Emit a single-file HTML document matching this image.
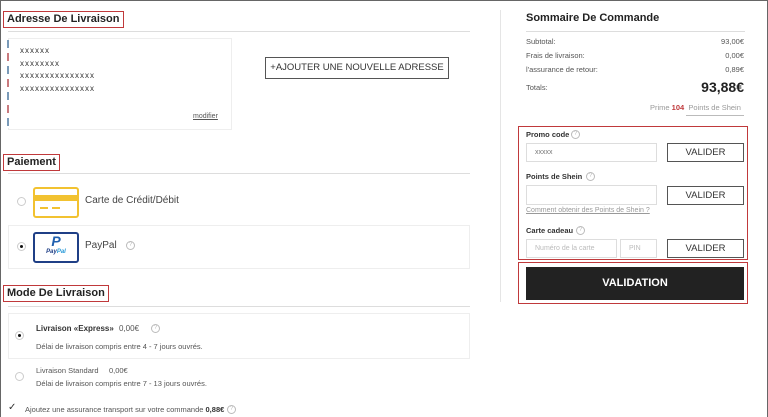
<!DOCTYPE html>
<html><head><meta charset="utf-8"><style>
*{margin:0;padding:0;box-sizing:border-box}
body{width:768px;height:417px;overflow:hidden;background:#fff;font-family:"Liberation Sans",Arial,sans-serif;color:#333;position:relative}
.a{position:absolute}
.frame{left:0;top:0;width:768px;height:417px;border:1px solid #666;border-bottom:none}
.h{font-weight:bold;font-size:11px;color:#222;border:1.5px solid #c0393b;padding:1px 3px;line-height:13px}
.ln{height:1px;background:#ddd}
.s{font-size:8px;color:#555}
.radio{width:9px;height:9px;border-radius:50%;border:1px solid #ccc;background:#fff}
.radio.on::after{content:"";position:absolute;left:2px;top:2px;width:3px;height:3px;border-radius:50%;background:#111}
.q{width:9px;height:9px;border-radius:50%;border:1px solid #bbb;font-size:6px;color:#bbb;text-align:center;line-height:7px}
.inp{border:1px solid #ddd;background:#fff;font-size:7px;color:#bbb;padding-left:8px;line-height:17px}
.btn{border:1px solid #555;font-size:9.5px;color:#333;text-align:center;line-height:17px}
.rb{border:1.5px solid #c0393b}
</style></head><body>
<div class="a frame"></div>

<div class="a h" style="left:3px;top:11px">Adresse De Livraison</div>
<div class="a ln" style="left:8px;top:31px;width:462px"></div>
<div class="a" style="left:8px;top:38px;width:224px;height:92px;border:1px solid #eee"></div>
<div class="a" style="left:7px;top:40px;width:2px;height:88px;background:repeating-linear-gradient(#7a9ab8 0 8px,#fff 8px 13px,#c97a7e 13px 21px,#fff 21px 26px)"></div>
<div class="a" style="left:20px;top:45px;font-size:8px;line-height:12.5px;letter-spacing:1px;color:#333">xxxxxx<br>xxxxxxxx<br>xxxxxxxxxxxxxxx<br>xxxxxxxxxxxxxxx</div>
<div class="a" style="left:193px;top:113px;font-size:7px;color:#555;text-decoration:underline">modifier</div>
<div class="a" style="left:265px;top:57px;width:184px;height:22px;border:1px solid #555;font-size:9.5px;color:#333;text-align:center;line-height:20px">+AJOUTER UNE NOUVELLE ADRESSE</div>

<div class="a h" style="left:3px;top:154px">Paiement</div>
<div class="a ln" style="left:8px;top:173px;width:462px"></div>
<div class="a radio" style="left:17px;top:197px"></div>
<div class="a" style="left:33px;top:187px;width:46px;height:31px;border:2px solid #f2c230;border-radius:3px"><div style="margin-top:6px;height:6px;background:#f2c230"></div><div style="margin:6px 0 0 5px;width:24px;height:2px;background:repeating-linear-gradient(90deg,#f2c230 0 8px,#fff 8px 12px)"></div></div>
<div class="a" style="left:85px;top:195px;font-size:10px;color:#444">Carte de Crédit/Débit</div>
<div class="a" style="left:8px;top:225px;width:462px;height:44px;border:1px solid #eee"></div>
<div class="a radio on" style="left:17px;top:242px"></div>
<div class="a" style="left:33px;top:232px;width:46px;height:31px;border:2px solid #1f3f86;border-radius:3px;text-align:center"><div style="font:italic bold 14px 'Liberation Sans';color:#1f5fae;line-height:15px">P</div><div style="font:italic bold 6px 'Liberation Sans';color:#1f3f86">Pay<span style="color:#2a9ad8">Pal</span></div></div>
<div class="a" style="left:85px;top:240px;font-size:10px;color:#444">PayPal</div>
<div class="a q" style="left:126px;top:241px">?</div>

<div class="a h" style="left:3px;top:285px">Mode De Livraison</div>
<div class="a ln" style="left:8px;top:306px;width:462px"></div>
<div class="a" style="left:8px;top:313px;width:462px;height:46px;border:1px solid #eee"></div>
<div class="a radio on" style="left:15px;top:331px"></div>
<div class="a s" style="left:36px;top:324px;font-weight:bold;color:#333">Livraison «Express»</div>
<div class="a s" style="left:119px;top:324px">0,00€</div>
<div class="a q" style="left:151px;top:324px">?</div>
<div class="a s" style="left:36px;top:342px;font-size:7.5px">Délai de livraison compris entre 4 - 7 jours ouvrés.</div>
<div class="a radio" style="left:15px;top:372px"></div>
<div class="a s" style="left:36px;top:366px;font-size:7.5px">Livraison Standard &nbsp;&nbsp;&nbsp; 0,00€</div>
<div class="a s" style="left:36px;top:379px;font-size:7.5px">Délai de livraison compris entre 7 - 13 jours ouvrés.</div>
<div class="a" style="left:8px;top:402px;font-size:10px;color:#333">✓</div>
<div class="a s" style="left:25px;top:405px;font-size:7.5px">Ajoutez une assurance transport sur votre commande <b style="color:#333">0,88€</b></div>
<div class="a q" style="left:227px;top:405px">?</div>

<div class="a" style="left:500px;top:10px;width:1px;height:292px;background:#e5e5e5"></div>

<div class="a" style="left:526px;top:12px;font-size:11px;font-weight:bold;color:#222">Sommaire De Commande</div>
<div class="a ln" style="left:526px;top:31px;width:219px"></div>
<div class="a s" style="left:526px;top:37px;font-size:7.5px">Subtotal:</div><div class="a s" style="right:24px;top:37px;font-size:7.5px">93,00€</div>
<div class="a s" style="left:526px;top:51px;font-size:7.5px">Frais de livraison:</div><div class="a s" style="right:24px;top:51px;font-size:7.5px">0,00€</div>
<div class="a s" style="left:526px;top:65px;font-size:7.5px">l'assurance de retour:</div><div class="a s" style="right:24px;top:65px;font-size:7.5px">0,89€</div>
<div class="a s" style="left:526px;top:83px;font-size:7.5px">Totals:</div><div class="a" style="right:24px;top:79px;font-size:14px;font-weight:bold;color:#222">93,88€</div>
<div class="a s" style="left:650px;top:103px;font-size:7.5px;color:#999">Prime <b style="color:#c0393b">104</b> &nbsp;Points de Shein</div>
<div class="a" style="left:686px;top:115px;width:58px;height:1px;background:#bbb"></div>

<div class="a rb" style="left:518px;top:126px;width:230px;height:134px"></div>
<div class="a s" style="left:526px;top:130px;font-weight:bold;color:#333;font-size:7.5px">Promo code</div><div class="a q" style="left:571px;top:130px">?</div>
<div class="a inp" style="left:526px;top:143px;width:131px;height:19px;color:#777">xxxxx</div>
<div class="a btn" style="left:667px;top:143px;width:77px;height:19px">VALIDER</div>
<div class="a s" style="left:526px;top:172px;font-weight:bold;color:#333;font-size:7.5px">Points de Shein</div><div class="a q" style="left:586px;top:172px">?</div>
<div class="a inp" style="left:526px;top:185px;width:131px;height:20px"></div>
<div class="a btn" style="left:667px;top:186px;width:77px;height:19px">VALIDER</div>
<div class="a s" style="left:526px;top:207px;font-size:7px;color:#999;text-decoration:underline">Comment obtenir des Points de Shein ?</div>
<div class="a s" style="left:526px;top:226px;font-weight:bold;color:#333;font-size:7.5px">Carte cadeau</div><div class="a q" style="left:576px;top:226px">?</div>
<div class="a inp" style="left:526px;top:239px;width:91px;height:19px">Numéro de la carte</div>
<div class="a inp" style="left:620px;top:239px;width:37px;height:19px">PIN</div>
<div class="a btn" style="left:667px;top:239px;width:77px;height:19px">VALIDER</div>

<div class="a rb" style="left:518px;top:262px;width:230px;height:42px"></div>
<div class="a" style="left:526px;top:267px;width:218px;height:33px;background:#222;color:#fff;font-size:11px;font-weight:bold;text-align:center;line-height:33px">VALIDATION</div>
</body></html>
